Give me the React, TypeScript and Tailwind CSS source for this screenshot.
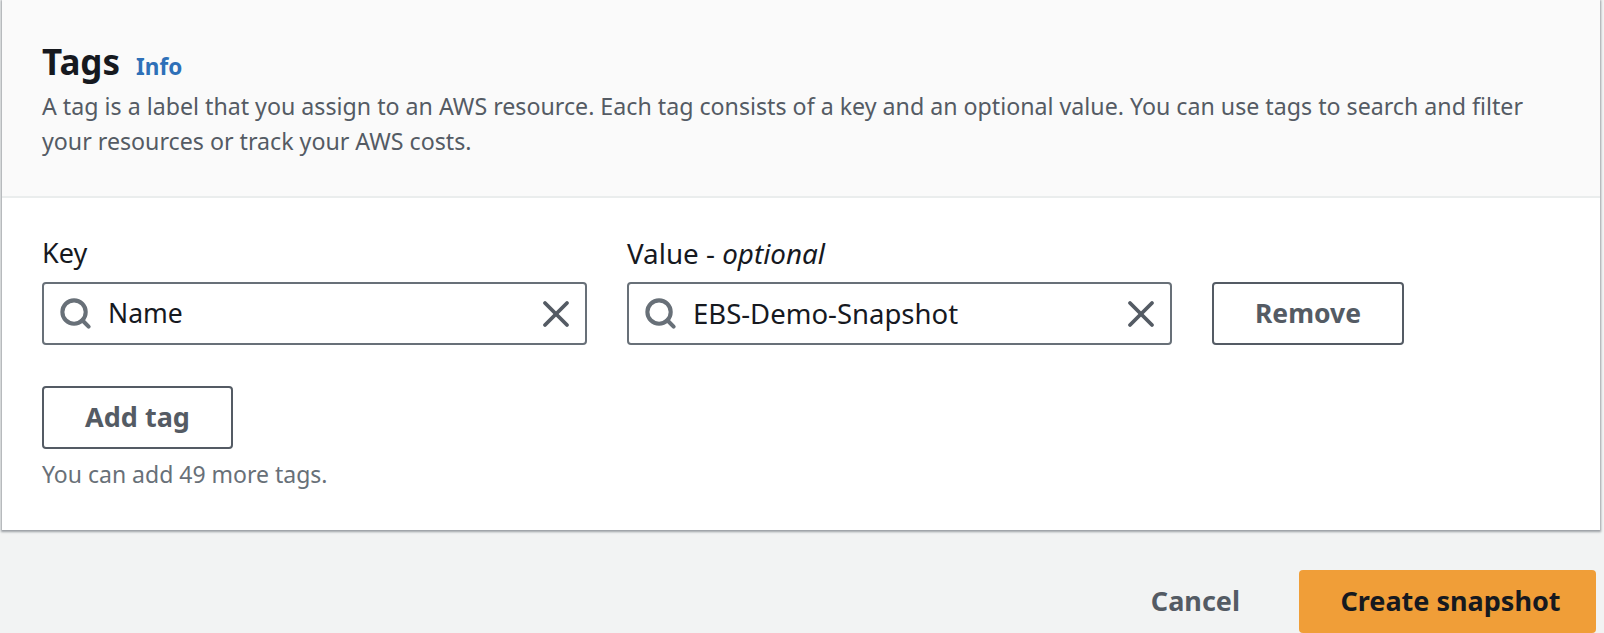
import { X, Search } from 'lucide-react';

function TokenInput({ value, textSize }: { value: string; textSize: string }) {
  return (
    <div className="flex h-[63px] items-center rounded-[4px] border-2 border-[#687078] bg-white pl-[14px] pr-[7px]">
      <Search size={35} strokeWidth={2.8} className="shrink-0 text-[#687078]" />
      <span className={`ml-[15px] flex-1 text-[#16191f] ${textSize}`}>{value}</span>
      <X size={44} strokeWidth={2.1} className="shrink-0 text-[#545b64]" />
    </div>
  );
}

export default function App() {
  return (
    <div className="h-[633px] w-[1604px] overflow-hidden bg-[#f2f3f3] font-['Noto_Sans',sans-serif]">
      <div className="ml-[2px] h-[530px] w-[1598px] bg-white shadow-[0_1px_2px_1px_rgba(84,91,100,0.55)]">
        <div className="h-[198px] border-b-2 border-[#eaeded] bg-[#fafafa] px-[40px] pt-[38px]">
          <div className="flex items-baseline gap-[16px]">
            <h2 className="text-[35px] leading-[48px] font-bold text-[#16191f]">Tags</h2>
            <a className="text-[22.5px] font-bold text-[#2e70b8]">Info</a>
          </div>
          <p className="mt-[3px] text-[23.2px] leading-[35px] text-[#545b64]">
            A tag is a label that you assign to an AWS resource. Each tag consists of a key and an optional value. You can use tags to search and filter your resources or track your AWS costs.
          </p>
        </div>
        <div className="px-[40px] pt-[36px]">
          <div className="flex items-end gap-[40px]">
            <div className="w-[545px]">
              <label className="mb-[10px] block text-[27px] leading-[38px] text-[#16191f]">Key</label>
              <TokenInput value="Name" textSize="text-[26.5px]" />
            </div>
            <div className="w-[545px]">
              <label className="mb-[10px] block text-[27.8px] leading-[38px] text-[#16191f]">
                Value - <i>optional</i>
              </label>
              <TokenInput value="EBS-Demo-Snapshot" textSize="text-[27.5px]" />
            </div>
            <button className="h-[63px] w-[192px] rounded-[4px] border-2 border-[#545b64] text-[26.5px] font-bold text-[#545b64]">Remove</button>
          </div>
          <button className="mt-[41px] block h-[63px] w-[191px] rounded-[4px] border-2 border-[#545b64] text-[27px] font-bold text-[#545b64]">Add tag</button>
          <p className="mt-[10px] text-[23px] leading-[30px] text-[#687078]">You can add 49 more tags.</p>
        </div>
      </div>
      <div className="mt-[40px] flex items-center justify-end pr-[8px]">
        <button className="mr-[59px] text-[27px] font-bold text-[#545b64]">Cancel</button>
        <button className="h-[63px] w-[297px] rounded-[4px] bg-[#f09e38] pl-[6px] text-[27px] font-bold text-[#16191f]">Create snapshot</button>
      </div>
    </div>
  );
}
